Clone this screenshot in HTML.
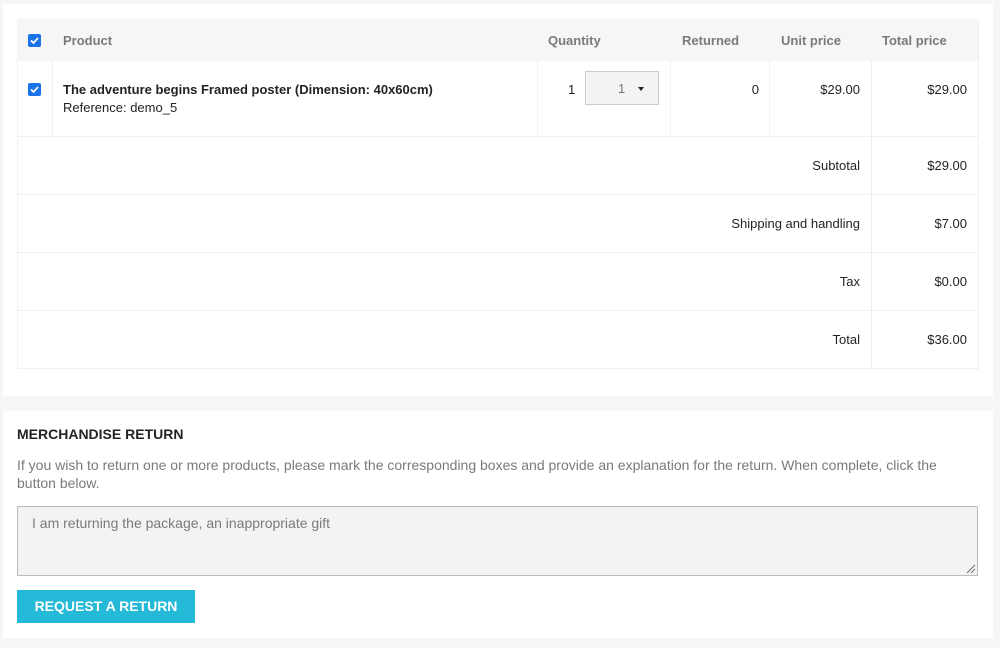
<!DOCTYPE html>
<html><head><style>
body{margin:0;width:1000px;height:648px;background:#f6f6f6;font-family:"Liberation Sans",sans-serif;font-size:13px;color:#232323;position:relative;overflow:hidden}
.p{position:absolute;background:#fff}
.a{position:absolute}
.cb{position:absolute;width:13px;height:13px;background:#1a73e8;border-radius:2px}
.cb svg{position:absolute;left:0;top:0}
.h{position:absolute;top:33px;font-weight:bold;color:#7a7a7a;font-size:13px}
.v{position:absolute;border-left:1px solid #f0f0f0}
.hr{position:absolute;left:17px;width:961px;border-top:1px solid #f0f0f0}
.r{position:absolute;text-align:right}
</style></head><body>
<div class="p" style="left:3px;top:4px;width:990px;height:392px"></div>
<div class="a" style="left:17px;top:19px;width:960px;height:349px;border:1px solid #f0f0f0;border-top:none"></div>
<div class="a" style="left:17px;top:19px;width:961px;height:42px;background:#f6f6f6"></div>
<div class="cb" style="left:28px;top:34px"><svg width="13" height="13"><path d="M3 6.5l2.5 2.5 4.5-5" stroke="#fff" stroke-width="1.7" fill="none"/></svg></div>
<div class="h" style="left:63px">Product</div>
<div class="h" style="left:548px">Quantity</div>
<div class="h" style="left:682px">Returned</div>
<div class="h" style="left:781px">Unit price</div>
<div class="h" style="left:882px">Total price</div>
<div class="v" style="left:52px;top:61px;height:75px"></div>
<div class="v" style="left:537px;top:61px;height:75px"></div>
<div class="v" style="left:670px;top:61px;height:75px"></div>
<div class="v" style="left:769px;top:61px;height:75px"></div>
<div class="v" style="left:871px;top:61px;height:307px"></div>
<div class="cb" style="left:28px;top:83px"><svg width="13" height="13"><path d="M3 6.5l2.5 2.5 4.5-5" stroke="#fff" stroke-width="1.7" fill="none"/></svg></div>
<div class="a" style="left:63px;top:82px;font-weight:bold">The adventure begins Framed poster (Dimension: 40x60cm)</div>
<div class="a" style="left:63px;top:100px">Reference: demo_5</div>
<div class="a" style="left:568px;top:82px">1</div>
<div class="a" style="left:585px;top:71px;width:72px;height:32px;border:1px solid #ccc;background:#f3f3f3"></div>
<div class="a" style="left:618px;top:81px;color:#777">1</div>
<div class="a" style="left:638px;top:87px;width:0;height:0;border-left:3.5px solid transparent;border-right:3.5px solid transparent;border-top:4px solid #232323"></div>
<div class="r" style="left:700px;width:59px;top:82px">0</div>
<div class="r" style="left:780px;width:80px;top:82px">$29.00</div>
<div class="r" style="left:880px;width:87px;top:82px">$29.00</div>
<div class="hr" style="top:136px"></div>
<div class="hr" style="top:194px"></div>
<div class="hr" style="top:252px"></div>
<div class="hr" style="top:310px"></div>
<div class="r" style="left:600px;width:260px;top:158px">Subtotal</div>
<div class="r" style="left:880px;width:87px;top:158px">$29.00</div>
<div class="r" style="left:600px;width:260px;top:216px">Shipping and handling</div>
<div class="r" style="left:880px;width:87px;top:216px">$7.00</div>
<div class="r" style="left:600px;width:260px;top:274px">Tax</div>
<div class="r" style="left:880px;width:87px;top:274px">$0.00</div>
<div class="r" style="left:600px;width:260px;top:332px">Total</div>
<div class="r" style="left:880px;width:87px;top:332px">$36.00</div>

<div class="p" style="left:3px;top:411px;width:990px;height:227px"></div>
<div class="a" style="left:17px;top:426px;font-weight:bold;font-size:14px">MERCHANDISE RETURN</div>
<div class="a" style="left:17px;top:456px;width:958px;color:#7a7a7a;font-size:14px;line-height:18px">If you wish to return one or more products, please mark the corresponding boxes and provide an explanation for the return. When complete, click the button below.</div>
<div class="a" style="left:17px;top:506px;width:959px;height:68px;border:1px solid #bbb;background:#f3f3f3"></div>
<div class="a" style="left:32px;top:515px;color:#7a7a7a;font-size:14px">I am returning the package, an inappropriate gift</div>
<svg class="a" style="left:965px;top:563px" width="11" height="11"><path d="M2 10L10 2M6 10L10 6" stroke="#777" stroke-width="1"/></svg>
<div class="a" style="left:17px;top:590px;width:178px;height:33px;background:#24b9d7;color:#fff;font-weight:bold;font-size:14px;line-height:33px;text-align:center">REQUEST A RETURN</div>
</body></html>
